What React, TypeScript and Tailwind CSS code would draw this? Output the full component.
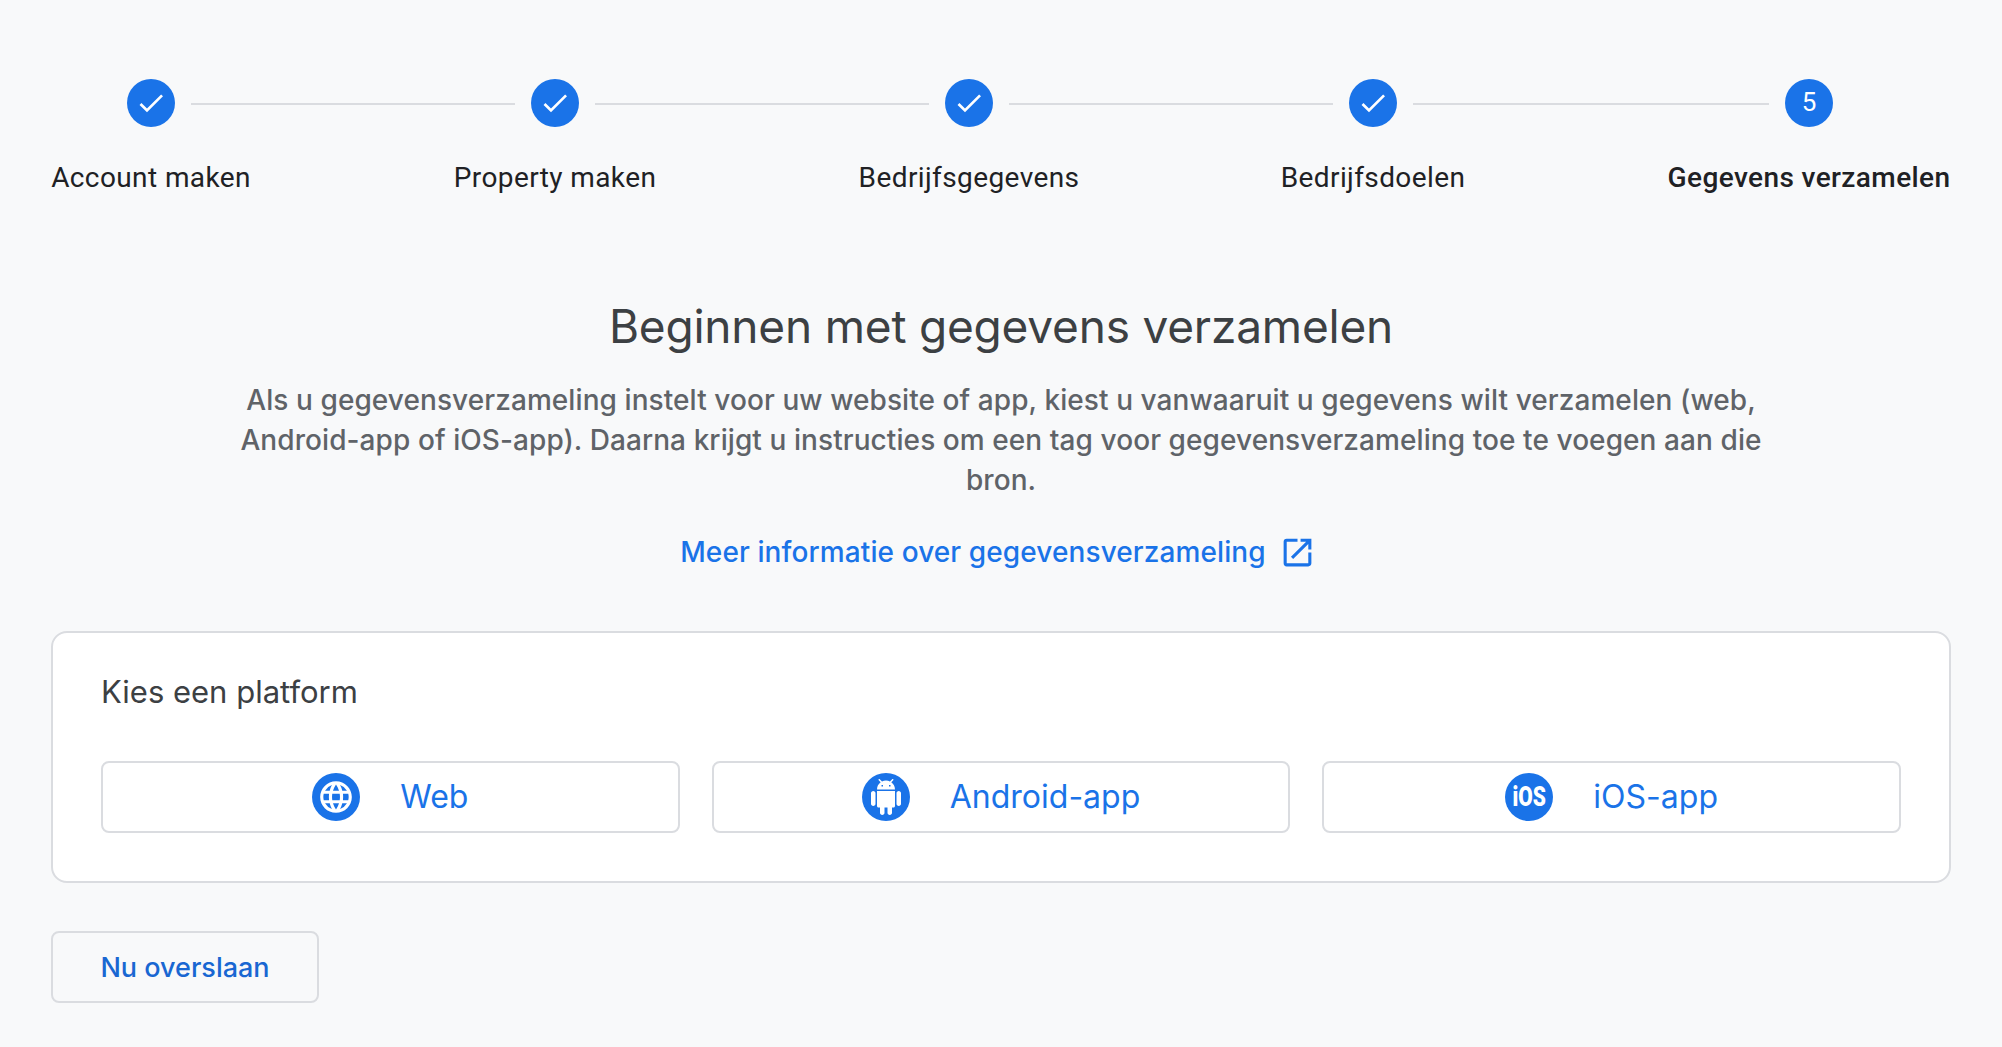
import React from "react";
import { MdCheck, MdOpenInNew, MdLanguage } from "react-icons/md";

const sans = "font-['Inter','Noto_Sans',sans-serif]";

function Step({ label, n, active }: { label: string; n?: number; active?: boolean }) {
  return (
    <div className="flex w-20 flex-col items-center">
      <div className="flex h-12 w-12 items-center justify-center rounded-full bg-[#1a73e8] text-white">
        {n ? <span className="-mt-[2px] text-[26px] leading-none">{n}</span> : <MdCheck size={32} />}
      </div>
      <div className={`mt-[35px] whitespace-nowrap text-[28px] leading-8 tracking-[0.4px] text-[#202124] ${active ? "font-medium" : ""}`}>{label}</div>
    </div>
  );
}

function Line({ w }: { w: string }) {
  return <div className={`mt-[24px] h-[2px] shrink-0 bg-[#dadce0] ${w}`} />;
}

function PlatformButton({ icon, label }: { icon: React.ReactNode; label: string }) {
  return (
    <button className="flex h-[72px] flex-1 items-center justify-center gap-10 rounded-lg border-2 border-[#dadce0] bg-white">
      <span className="flex h-12 w-12 items-center justify-center overflow-hidden rounded-full bg-[#1a73e8] text-white">{icon}</span>
      <span className={`${sans} text-[32px] text-[#1a73e8]`}>{label}</span>
    </button>
  );
}

function AndroidIcon() {
  return (
    <svg viewBox="0 0 24 24" width="36" height="36" fill="currentColor">
      <path d="M6 18c0 .55.45 1 1 1h1v3.5c0 .83.67 1.5 1.5 1.5s1.5-.67 1.5-1.5V19h2v3.5c0 .83.67 1.5 1.5 1.5s1.5-.67 1.5-1.5V19h1c.55 0 1-.45 1-1V8H6v10zM3.5 8C2.67 8 2 8.67 2 9.5v7c0 .83.67 1.5 1.5 1.5S5 17.33 5 16.5v-7C5 8.67 4.33 8 3.5 8zm17 0c-.83 0-1.5.67-1.5 1.5v7c0 .83.67 1.5 1.5 1.5s1.5-.67 1.5-1.5v-7c0-.83-.67-1.5-1.5-1.5zm-4.97-5.84l1.3-1.3c.2-.2.2-.51 0-.71-.2-.2-.51-.2-.71 0l-1.48 1.48C13.85 1.23 12.95 1 12 1c-.96 0-1.86.23-2.66.63L7.85.15c-.2-.2-.51-.2-.71 0-.2.2-.2.51 0 .71l1.31 1.31C6.97 3.26 6 5.01 6 7h12c0-1.99-.97-3.75-2.47-4.84zM10 5H9V4h1v1zm5 0h-1V4h1v1z" />
    </svg>
  );
}

export default function App() {
  return (
    <div className="min-h-[1047px] bg-[#f8f9fa] px-[51px] pt-[79px] font-['Roboto',sans-serif]">
      <div className="flex pl-[60px]">
        <Step label="Account maken" />
        <Line w="w-[324px]" />
        <Step label="Property maken" />
        <Line w="w-[334px]" />
        <Step label="Bedrijfsgegevens" />
        <Line w="w-[324px]" />
        <Step label="Bedrijfsdoelen" />
        <Line w="w-[356px]" />
        <Step label="Gegevens verzamelen" n={5} active />
      </div>

      <div className={`${sans} mt-[102px] text-center`}>
        <h1 className="text-[46px] leading-[60px] tracking-[-0.2px] text-[#3c4043]">Beginnen met gegevens verzamelen</h1>
        <p className="mx-auto mt-[24px] w-[1540px] text-[28px] font-[450] leading-10 tracking-[0.08px] text-[#5f6368]">
          Als u gegevensverzameling instelt voor uw website of app, kiest u vanwaaruit u gegevens wilt verzamelen (web, Android-app of iOS-app). Daarna krijgt u instructies om een tag voor gegevensverzameling toe te voegen aan die bron.
        </p>
        <a className="mt-[32px] flex items-center justify-center gap-[13px] pr-[6px] text-[28px] font-[450] leading-10 tracking-[0.1px] text-[#1a73e8]">
          Meer informatie over gegevensverzameling
          <MdOpenInNew size={37} />
        </a>
      </div>

      <div className="mt-[59px] rounded-2xl border-2 border-[#dadce0] bg-white px-12 pb-12 pt-[39px]">
        <div className={`${sans} text-[31px] leading-10 text-[#3c4043]`}>Kies een platform</div>
        <div className="mt-[49px] flex gap-8">
          <PlatformButton icon={<MdLanguage size={38} />} label="Web" />
          <PlatformButton icon={<AndroidIcon />} label="Android-app" />
          <PlatformButton icon={<span className="scale-x-[0.75] text-[28px] font-black leading-none">iOS</span>} label="iOS-app" />
        </div>
      </div>

      <button className={`${sans} mt-12 h-[72px] w-[268px] rounded-lg border-2 border-[#dadce0] pt-[2px] text-[27px] font-medium text-[#1967d2]`}>Nu overslaan</button>
    </div>
  );
}
